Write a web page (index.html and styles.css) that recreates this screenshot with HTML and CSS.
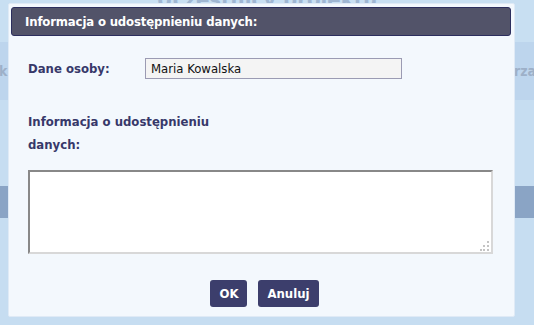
FILE: index.html
```html
<!DOCTYPE html>
<html>
  <head>
    <title>Informacja o udostępnieniu danych</title>
    <meta charset="UTF-8">
    <link rel="stylesheet" href="styles.css">
  </head>
  <body>
    <!-- page behind the dialog -->
    <div class="page">
      <div class="page-title">Uczestnicy projektu</div>
      <div class="page-tabs">
        <span class="tab-left">k</span>
        <span class="tab-right">arza</span>
      </div>
      <div class="page-gap"></div>
      <div class="page-band"></div>
      <div class="page-rest"></div>
    </div>

    <div class="dialog">
      <div class="dialog-header">Informacja o udostępnieniu danych:</div>
      <div class="dialog-body">
        <div class="row">
          <label class="label" for="osoba">Dane osoby:</label>
          <input type="text" id="osoba" class="field" value="Maria Kowalska" readonly>
        </div>
        <div class="label label-wide">Informacja o udostępnieniu danych:</div>
        <div class="info-wrap">
          <textarea class="info"></textarea>
          <svg class="grip" width="10" height="10" viewBox="0 0 10 10">
            <rect x="7" y="0" width="2" height="2" fill="#c4c4c4"/>
            <rect x="3" y="4" width="2" height="2" fill="#c4c4c4"/>
            <rect x="7" y="4" width="2" height="2" fill="#c4c4c4"/>
            <rect x="0" y="8" width="2" height="2" fill="#c4c4c4"/>
            <rect x="3" y="8" width="2" height="2" fill="#c4c4c4"/>
            <rect x="7" y="8" width="2" height="2" fill="#c4c4c4"/>
          </svg>
        </div>
        <div class="buttons">
          <button class="btn">OK</button>
          <button class="btn">Anuluj</button>
        </div>
      </div>
    </div>
  </body>
</html>
```

FILE: styles.css
```css
/* page behind */
body {
	margin: 0;
	font-family: "DejaVu Sans Condensed", "DejaVu Sans", sans-serif;
	font-size: 13px;
	background-color: #c6ddf1;
	overflow: hidden;
}
.page {
	height: 325px;
	display: flex;
	flex-direction: column;
}
.page-title {
	height: 42px;
	background-color: #c8dff2;
	color: #9fb6d2;
	font-weight: bold;
	font-size: 22px;
	text-align: center;
	line-height: 0;
}
.page-tabs {
	height: 58px;
	background-color: #bdd5ed;
	display: flex;
	justify-content: space-between;
	align-items: center;
	color: #9db0c8;
	font-weight: bold;
	font-size: 14px;
}
.tab-left {
	margin-left: -1px;
}
.tab-right {
	margin-right: -2px;
}
.page-gap {
	height: 86px;
}
.page-band {
	height: 32px;
	background-color: #8aa4c5;
}
.page-rest {
	flex: 1;
}

/* dialog */
.dialog {
	position: absolute;
	left: 8px;
	top: 3px;
	width: 505px;
	height: 312px;
	background-color: #f3f8fd;
	border: 1px solid #dfeaf6;
	border-radius: 2px;
}
.dialog-header {
	margin: 3px 3px 0 2px;
	height: 27px;
	line-height: 27px;
	padding-left: 13px;
	background-color: #525369;
	border: 1px solid #2c2e5e;
	border-radius: 3px;
	color: #fff;
	font-weight: bold;
	font-size: 13px;
	letter-spacing: -0.15px;
}
.dialog-body {
	padding: 22px 20px 0 19px;
}
.row {
	display: flex;
	align-items: center;
}
.label {
	color: #37386a;
	font-weight: bold;
	font-size: 13px;
}
.row .label {
	width: 117px;
}
.field {
	width: 257px;
	height: 21px;
	box-sizing: border-box;
	border: 1px solid #9b9bb3;
	background-color: #f4f4f4;
	padding: 0 5px;
	font-family: "DejaVu Sans Condensed", "DejaVu Sans", sans-serif;
	font-size: 13px;
	color: #111;
	outline: none;
}
.label-wide {
	width: 185px;
	margin-top: 31px;
	line-height: 23px;
}
.info-wrap {
	position: relative;
	margin-top: 14px;
	width: 465px;
	height: 84px;
}
.info {
	display: block;
	width: 100%;
	height: 100%;
	box-sizing: border-box;
	border-style: solid;
	border-width: 2px;
	border-color: #888 #d8d8d8 #d8d8d8 #888;
	background-color: #fff;
	resize: none;
	outline: none;
}
.grip {
	position: absolute;
	right: 3px;
	bottom: 3px;
}
.buttons {
	display: flex;
	justify-content: center;
	gap: 11px;
	margin-top: 26px;
	padding-left: 7px;
}
.btn {
	height: 27px;
	padding: 0 9px;
	border: none;
	border-radius: 3px;
	background-color: #3c3e6c;
	color: #fff;
	font-family: "DejaVu Sans Condensed", "DejaVu Sans", sans-serif;
	font-weight: bold;
	font-size: 13px;
}
```
